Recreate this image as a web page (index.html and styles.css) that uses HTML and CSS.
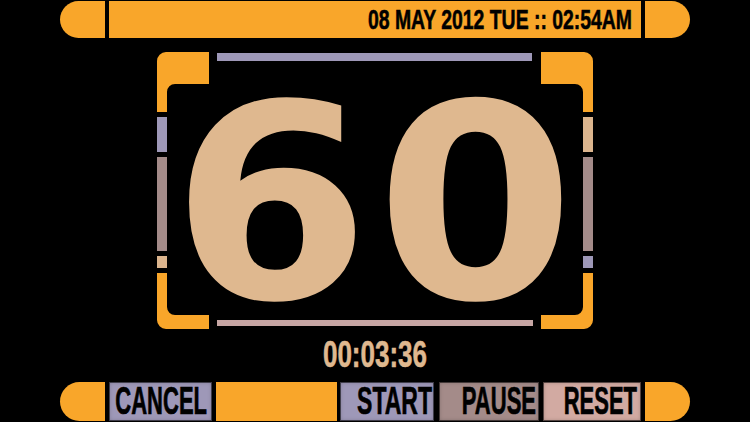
FILE: index.html
```html
<!DOCTYPE html>
<html lang="en">
<head>
<meta charset="utf-8">
<title>LCARS Timer</title>
<link rel="stylesheet" href="styles.css">
</head>
<body>
<div class="screen">
  <header class="bar bar-top">
    <div class="cap cap-left"></div>
    <div class="strip strip-date"><span class="date">08 MAY 2012 TUE :: 02:54AM</span></div>
    <div class="cap cap-right"></div>
  </header>

  <main class="frame">
    <div class="side side-left">
      <svg class="corner corner-top" width="52" height="60" viewBox="0 0 52 60"><path d="M0 9A9 9 0 0 1 9 0H52V32H18A8 8 0 0 0 10 40V60H0Z"/></svg>
      <div class="seg seg-a lav"></div>
      <div class="seg seg-b mauve"></div>
      <div class="seg seg-c tan"></div>
      <svg class="corner corner-bottom" width="52" height="56" viewBox="0 0 52 56"><path d="M0 0H10V34A8 8 0 0 0 18 42H52V56H9A9 9 0 0 1 0 47Z"/></svg>
    </div>
    <div class="center">
      <div class="rule rule-top"></div>
      <div class="count"><span class="count-text">60</span></div>
      <div class="rule rule-bottom"></div>
    </div>
    <div class="side side-right">
      <svg class="corner corner-top" width="52" height="60" viewBox="0 0 52 60"><path d="M52 9A9 9 0 0 0 43 0H0V32H34A8 8 0 0 1 42 40V60H52Z"/></svg>
      <div class="seg seg-a tan"></div>
      <div class="seg seg-b mauve"></div>
      <div class="seg seg-c lav"></div>
      <svg class="corner corner-bottom" width="52" height="56" viewBox="0 0 52 56"><path d="M52 0H42V34A8 8 0 0 1 34 42H0V56H43A9 9 0 0 0 52 47Z"/></svg>
    </div>
  </main>

  <div class="timer"><span class="timer-text">00:03:36</span></div>

  <footer class="bar bar-bottom">
    <div class="cap cap-left"></div>
    <button class="btn btn-cancel"><span class="label">CANCEL</span></button>
    <div class="strip strip-fill"></div>
    <button class="btn btn-start"><span class="label">START</span></button>
    <button class="btn btn-pause"><span class="label">PAUSE</span></button>
    <button class="btn btn-reset"><span class="label">RESET</span></button>
    <div class="cap cap-right"></div>
  </footer>
</div>
</body>
</html>
```

FILE: styles.css
```css
html, body {
  margin: 0;
  padding: 0;
  background: #000;
}

.screen {
  width: 750px;
  height: 422px;
  display: flex;
  flex-direction: column;
  overflow: hidden;
  font-family: "Liberation Sans", Arial, sans-serif;
}

/* ---------- top / bottom bars ---------- */
.bar {
  display: flex;
  padding-left: 60px;
  width: 630px;
  flex: none;
}

.bar-top {
  margin-top: 1px;
  height: 37px;
  gap: 4px;
}

.bar-bottom {
  margin-top: 9px;
  height: 39px;
}

.cap {
  width: 45px;
  flex: none;
  background: #f9a62a;
}

.cap-left {
  border-radius: 20px 0 0 20px;
}

.cap-right {
  border-radius: 0 20px 20px 0;
}

.strip {
  background: #f9a62a;
}

.strip-date {
  flex: 1;
  display: flex;
  align-items: center;
  justify-content: flex-end;
  padding-right: 9px;
}

.date {
  display: inline-block;
  font-size: 19.4px;
  font-weight: bold;
  line-height: 1;
  color: #000;
  transform: scaleY(1.45);
  -webkit-text-stroke: 0.4px #000;
  white-space: nowrap;
}

/* ---------- frame ---------- */
.frame {
  margin-top: 14px;
  margin-left: 157px;
  width: 436px;
  height: 277px;
  flex: none;
  display: flex;
}

.side {
  width: 52px;
  flex: none;
  display: flex;
  flex-direction: column;
  gap: 5px;
}

.side-left {
  align-items: flex-start;
}

.side-right {
  align-items: flex-end;
}

.corner {
  display: block;
  fill: #f9a62a;
  flex: none;
}

.seg {
  width: 10px;
  flex: none;
}

.seg-a { height: 35px; }
.seg-b { height: 94px; }
.seg-c { height: 12px; }

.lav { background: #9e98b8; }
.mauve { background: #a48b89; }
.tan { background: #dcb58e; }

.center {
  width: 332px;
  min-width: 0;
  flex: none;
  display: flex;
  flex-direction: column;
}

.rule {
  flex: none;
}

.rule-top {
  margin: 1px 9px 0 8px;
  height: 8px;
  background: #9e98b8;
}

.rule-bottom {
  margin: 0 8px 3px 8px;
  height: 6px;
  background: #c7a6a4;
}

.count {
  flex: 1;
  min-height: 0;
  display: flex;
  align-items: flex-start;
  justify-content: center;
  padding-top: 22px;
}

.count-text {
  display: block;
  font-family: "DejaVu Sans", "Liberation Sans", sans-serif;
  font-weight: bold;
  font-size: 271px;
  line-height: 0.9;
  color: #dfb88f;
  white-space: nowrap;
  letter-spacing: 5.4px;
  flex: none;
  transform: translateX(1px) scaleX(1.055);
}

/* ---------- timer ---------- */
.timer {
  margin-top: 6px;
  height: 38px;
  flex: none;
  display: flex;
  align-items: center;
  justify-content: center;
}

.timer-text {
  display: inline-block;
  font-size: 26px;
  font-weight: bold;
  line-height: 1;
  color: #dfb88f;
  transform: scaleY(1.45);
  -webkit-text-stroke: 0.4px #dfb88f;
}

/* ---------- buttons ---------- */
.btn {
  margin: 0;
  border: 0;
  padding: 0 4px 0 0;
  display: flex;
  align-items: center;
  justify-content: flex-end;
  font-family: inherit;
  box-shadow: inset 0 0 0 1px rgba(0, 0, 0, 0.55), inset 0 0 4px rgba(0, 0, 0, 0.25);
  cursor: pointer;
}

.label {
  display: inline-block;
  font-size: 22px;
  font-weight: bold;
  line-height: 1;
  color: #000;
  transform: scaleY(1.78);
  -webkit-text-stroke: 0.4px #000;
}

.btn-cancel {
  margin-left: 4px;
  width: 103px;
  background: #9e98b8;
  padding-right: 5px;
}

.strip-fill {
  margin-left: 4px;
  width: 121px;
}

.btn-start {
  margin-left: 3px;
  width: 94px;
  background: #9e98b8;
  padding-right: 2px;
}

.btn-start .label {
  font-size: 23px;
  transform: scaleY(1.72);
}

.btn-pause {
  margin-left: 5px;
  width: 100px;
  background: #a48b89;
  padding-right: 3px;
}

.btn-reset {
  margin-left: 4px;
  width: 98px;
  background: #d2aaa2;
}

.bar-bottom .cap-right {
  margin-left: 4px;
}
```
